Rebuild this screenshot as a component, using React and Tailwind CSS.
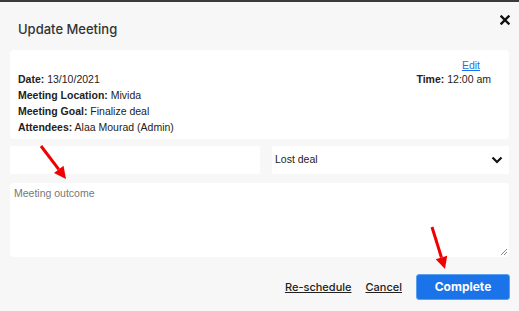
import React from 'react';

function Arrow({ x1, y1, x2, y2 }) {
  const dx = x2 - x1;
  const dy = y2 - y1;
  const len = Math.sqrt(dx * dx + dy * dy);
  const ux = dx / len;
  const uy = dy / len;
  const bx = x2 - ux * 12;
  const by = y2 - uy * 12;
  const px = -uy * 6;
  const py = ux * 6;
  return (
    <g>
      <line x1={x1} y1={y1} x2={bx} y2={by} stroke="#f00000" strokeWidth="3" />
      <polygon points={`${x2},${y2} ${bx + px},${by + py} ${bx - px},${by - py}`} fill="#f00000" />
    </g>
  );
}

export default function App() {
  return (
    <div className="relative w-[519px] h-[311px] bg-[#f7f7f7] overflow-hidden" style={{ fontFamily: '"Liberation Sans", Arial, sans-serif' }}>
      <div className="h-[2px] bg-[#3a3a3a]" />
      <div className="flex items-start justify-between pl-[18px] pr-[9px] pt-[13px] h-[48px]">
        <h1 className="text-[13px] font-medium text-[#333] mt-[5px]" style={{ fontFamily: 'Inter, sans-serif' }}>Update Meeting</h1>
        <svg width="10" height="10" viewBox="0 0 10 10" className="mt-[0px]">
          <path d="M1.5 1.5 L8.5 8.5 M8.5 1.5 L1.5 8.5" stroke="#111" strokeWidth="2.4" strokeLinecap="square" />
        </svg>
      </div>

      <div className="mx-[10px] h-[89px] bg-white rounded-[4px] flex justify-between pl-[8px] pr-[18px] pt-[8px] text-[10.5px] text-[#222]">
        <div className="pt-[13px] leading-[16px]">
          <div><b className="font-semibold">Date:</b> 13/10/2021</div>
          <div><b className="font-semibold">Meeting Location:</b> Mivida</div>
          <div><b className="font-semibold">Meeting Goal:</b> Finalize deal</div>
          <div><b className="font-semibold">Attendees:</b> Alaa Mourad (Admin)</div>
        </div>
        <div className="flex flex-col items-end leading-[14px]">
          <a className="text-[#1a73e8] underline mr-[11px]" href="#">Edit</a>
          <div><b className="font-semibold">Time:</b> 12:00 am</div>
        </div>
      </div>

      <div className="flex gap-[12px] mx-[10px] mt-[7px]">
        <div className="w-[250px] h-[28px] bg-white rounded-[2px]" />
        <div className="flex-1 h-[28px] bg-white rounded-[2px] flex items-center justify-between pl-[3px] pr-[6px] text-[10.5px] text-[#222]">
          <span>Lost deal</span>
          <svg width="12" height="8" viewBox="0 0 12 8">
            <path d="M1.5 1.5 L6 6 L10.5 1.5" stroke="#111" strokeWidth="2.2" fill="none" />
          </svg>
        </div>
      </div>

      <div className="relative mx-[10px] mt-[9px] h-[74px] bg-white rounded-[4px] px-[4px] pt-[3px] text-[10.5px] text-[#777]">
        Meeting outcome
        <svg width="9" height="9" viewBox="0 0 9 9" className="absolute right-[1px] bottom-[1px]">
          <path d="M8 2 L2 8 M8 5 L5 8" stroke="#888" strokeWidth="1" />
        </svg>
      </div>

      <div className="flex items-center justify-end gap-[14px] mr-[9px] mt-[17px]">
        <a href="#" className="text-[11px] text-[#222] underline font-medium" style={{ fontFamily: 'Inter, sans-serif' }}>Re-schedule</a>
        <a href="#" className="text-[11px] text-[#222] underline font-medium" style={{ fontFamily: 'Inter, sans-serif' }}>Cancel</a>
        <button className="w-[94px] h-[26px] bg-[#1a73e8] border border-[#5ea0f0] rounded-[3px] text-white text-[12px] font-bold" style={{ fontFamily: 'Inter, sans-serif' }}>Complete</button>
      </div>

      <svg className="absolute left-0 top-0 pointer-events-none" width="519" height="311">
        <Arrow x1={41} y1={146} x2={66} y2={179} />
        <Arrow x1={432} y1={227} x2={445} y2={269} />
      </svg>
    </div>
  );
}
